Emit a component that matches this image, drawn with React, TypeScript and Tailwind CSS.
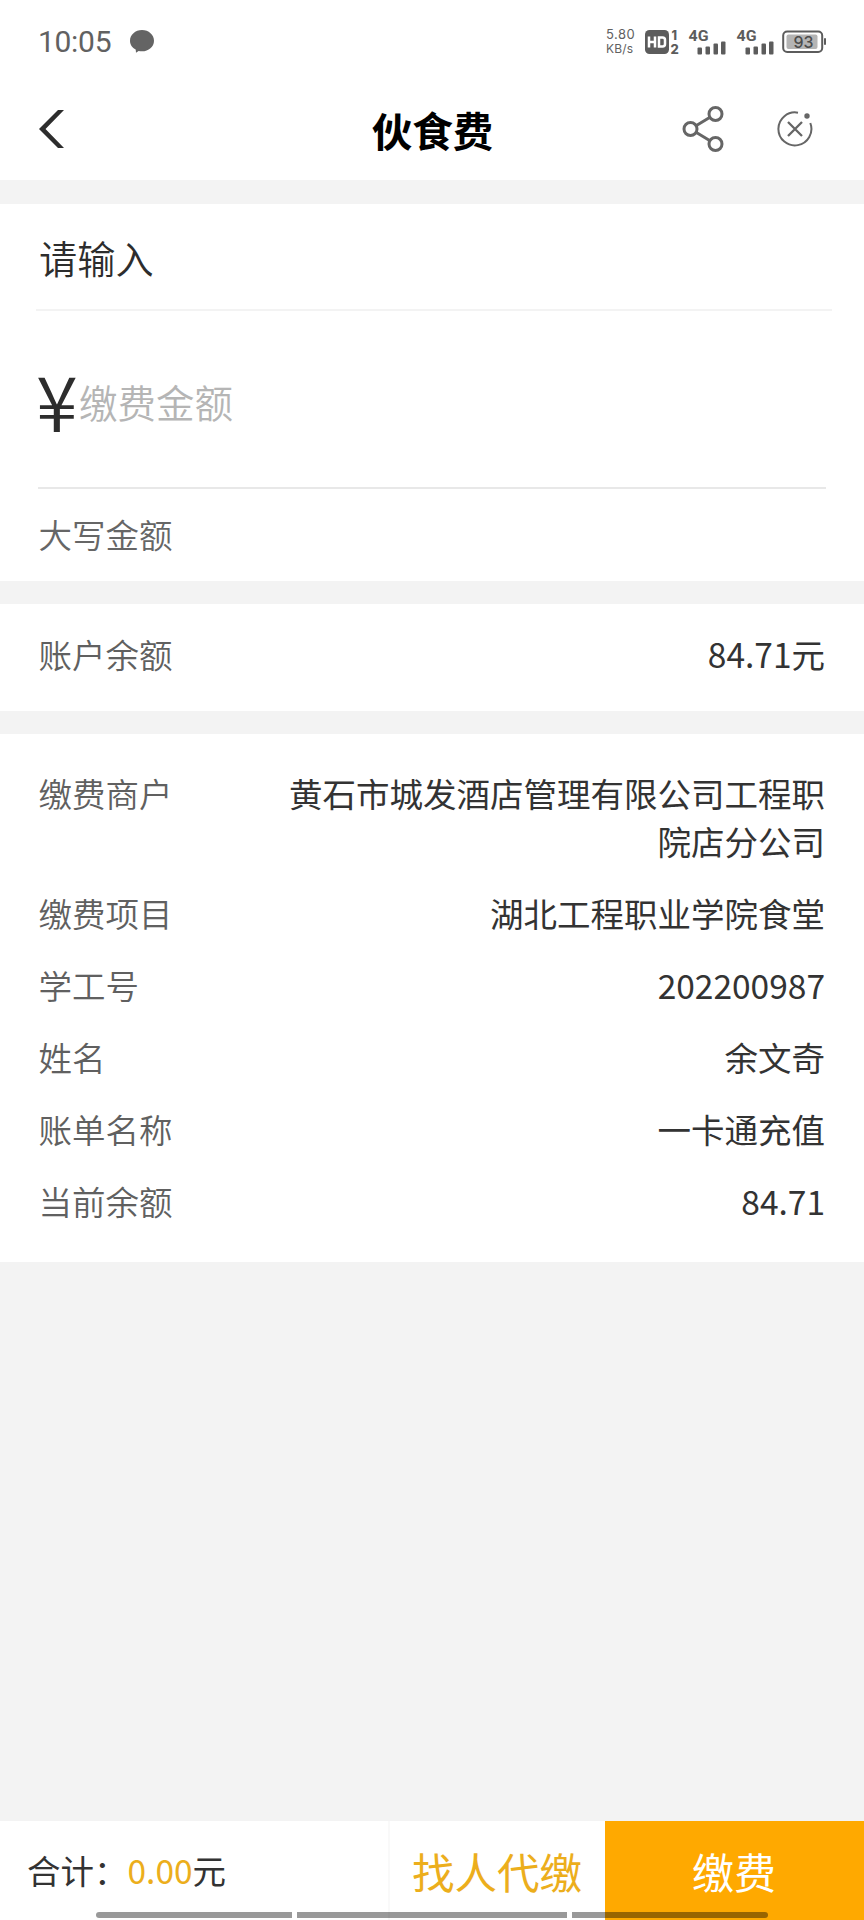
import React from 'react';

type Detail = {
  label: string;
  value: string;
};

const details: Detail[] = [
  { label: '缴费商户', value: '黄石市城发酒店管理有限公司工程职院店分公司' },
  { label: '缴费项目', value: '湖北工程职业学院食堂' },
  { label: '学工号', value: '202200987' },
  { label: '姓名', value: '余文奇' },
  { label: '账单名称', value: '一卡通充值' },
  { label: '当前余额', value: '84.71' },
];

function Signal() {
  return (
    <svg className="overflow-visible" width="38" height="26" viewBox="0 0 38 26" fill="#5c5c5c">
      <text x="0.5" y="12" fontSize="15.5" fontWeight="700" fontFamily="Roboto, sans-serif" textLength="20" lengthAdjust="spacingAndGlyphs">4G</text>
      <rect x="9.5" y="18.5" width="4.5" height="7" rx="1" />
      <rect x="17.5" y="17.5" width="4.5" height="8" rx="1" />
      <rect x="25.5" y="14.5" width="4.5" height="11" rx="1" />
      <rect x="33" y="12.5" width="4.5" height="13" rx="1" />
    </svg>
  );
}

function StatusBar() {
  return (
    <div className="flex h-[80px] items-center justify-between pl-[38px] pr-[38px] pt-[3px] font-normal text-[#616161]">
      <div className="flex items-center gap-[18px]">
        <span className="font-['Roboto',sans-serif] text-[30px] leading-none tracking-[-0.3px]">10:05</span>
        <svg width="26" height="24" viewBox="0 0 26 24" fill="#646464">
          <path d="M13 0c6.700 0 12 4.800 12 10.700s-5.300 10.600-12 10.600c-1.200 0-2.300-.1-3.400-.4L7 22.800 6.700 19.500C3.200 17.800 1 14.500 1 10.700 1 4.800 6.300 0 13 0z" />
        </svg>
      </div>

      <div className="flex items-center">
        <div className="w-[29px] whitespace-nowrap font-['Inter',sans-serif] text-[13px] leading-[13.5px] tracking-[0.5px]">
          <p>5.80</p>
          <p className="text-[12px] tracking-[0.2px]">KB/s</p>
        </div>
        <svg className="ml-[9px] overflow-visible" width="36" height="26" viewBox="0 0 36 26" fill="#5c5c5c">
          <rect x="1" y="1" width="24" height="24" rx="4.5" />
          <path d="M5 7.500v11M11 7.500v11M5 13h6M15 8.500h3.500q2.500 0 2.500 2.500v4q0 2.500-2.500 2.500H15z" fill="none" stroke="#fff" strokeWidth="2.5" />
          <text x="27.5" y="10.5" fontSize="12.5" fontWeight="800" fontFamily="Inter, sans-serif">1</text>
          <text x="26.5" y="25" fontSize="13" fontWeight="800" fontFamily="Inter, sans-serif">2</text>
        </svg>
        <div className="ml-[8px]"><Signal /></div>
        <div className="ml-[10px]"><Signal /></div>
        <svg className="ml-[8px] overflow-visible" width="44" height="24" viewBox="0 0 44 24">
          <rect x="1.2" y="1.5" width="39" height="20.5" rx="4" fill="none" stroke="#5c5c5c" strokeWidth="2" />
          <rect x="4.5" y="4.5" width="31" height="14.5" rx="2" fill="#b4b4b4" />
          <rect x="42" y="8" width="2" height="7" rx="1" fill="#5c5c5c" />
          <text x="11.5" y="18" fontSize="16.5" fontWeight="500" fontFamily="Inter, sans-serif" fill="#4b4b4b" textLength="20" lengthAdjust="spacingAndGlyphs">93</text>
        </svg>
      </div>
    </div>
  );
}

function Header() {
  return (
    <header className="grid h-[100px] grid-cols-[1fr_auto_1fr] items-center pb-[2px] pl-[38px] pr-[51px]">
      <svg width="26" height="40" viewBox="0 0 26 40" fill="#2d2d2d">
        <path d="M20 1h6L7.500 20 26 39h-6L1 20z" />
      </svg>
      <h1 className="translate-x-[7px] pt-[2px] text-[40.5px] font-bold leading-[48px] text-black">伙食费</h1>
      <div className="flex items-center justify-end gap-[53px]">
        <svg width="42" height="46" viewBox="0 0 42 46" fill="none" stroke="#666" strokeWidth="3">
          <circle cx="8.5" cy="23" r="6.5" />
          <circle cx="33.5" cy="8" r="6.5" />
          <circle cx="33.5" cy="38" r="6.5" />
          <path d="M14 19.700 28 11.300M14 26.300l14 8.400" />
        </svg>
        <svg width="36" height="36" viewBox="0 0 36 36" fill="none" stroke="#666" strokeWidth="2">
          <path d="M21 1.700A16.500 16.500 0 1 0 33.300 12" />
          <path d="M11 11l14 14M25 11 11 25" strokeWidth="2.3" />
          <circle cx="30" cy="5" r="2.7" fill="#666" stroke="none" />
        </svg>
      </div>
    </header>
  );
}

function AmountForm() {
  return (
    <section className="h-[377px] bg-white">
      <div className="ml-[36px] mr-[32px] flex h-[107px] items-center border-b-2 border-[#f3f3f3] pl-[3px] pt-[3px] text-[38.2px] text-[#2d2d2d]">
        请输入
      </div>
      <div className="mx-[38px] flex h-[178px] items-center border-b-2 border-[#e8e8e8]">
        <span className="-ml-[2px] w-[43px] pb-[1px] text-[76px] leading-none text-[#2d2d2d]">¥</span>
        <span className="pt-[4px] text-[38.5px] leading-none text-[#b5b5b5]">缴费金额</span>
      </div>
      <div className="flex h-[92px] items-center pb-[2px] pl-[38.5px] text-[33.5px] text-[#666]">大写金额</div>
    </section>
  );
}

function Row({ label, value }: Detail) {
  return (
    <div className="flex justify-between">
      <span className="text-[#606060]">{label}</span>
      <span className="w-[550px] text-right font-normal text-[#333]">{value}</span>
    </div>
  );
}

function Footer() {
  return (
    <footer className="relative flex h-[99px] bg-white">
      <div className="flex w-[390px] items-center border-r-2 border-[#f9f9f9] pl-[27px] font-normal text-[33.5px] text-[#333]">
        合计：<span className="text-[#ecae1c]">0.00</span>元
      </div>
      <button className="w-[215px] pr-[1px] text-[42.5px] font-normal text-[#ecae1c]">找人代缴</button>
      <button className="flex-1 bg-[#ffa900] pr-[1px] text-[42px] font-normal text-white">缴费</button>

      {/* System gesture bars */}
      <div className="absolute bottom-[2px] left-[96px] flex gap-[5px]">
        <div className="h-[6px] w-[196px] rounded-l-full bg-black/40" />
        <div className="h-[6px] w-[270px] bg-black/40" />
        <div className="h-[6px] w-[196px] rounded-r-full bg-black/40" />
      </div>
    </footer>
  );
}

export default function App() {
  return (
    <div className="flex h-[1920px] w-[864px] flex-col bg-[#f3f3f3] font-['Noto_Sans_CJK_SC',sans-serif] font-[350]">
      <div className="bg-white">
        <StatusBar />
        <Header />
      </div>

      <main className="mt-[24px] flex flex-1 flex-col gap-[23px]">
        <AmountForm />
        <section className="h-[107px] bg-white pl-[38.5px] pr-[39px] pt-[25.500px] text-[33.5px] leading-[48px]">
          <Row label="账户余额" value="84.71元" />
        </section>
        <section className="flex h-[528px] flex-col gap-[24px] bg-white pl-[38.5px] pr-[39px] pt-[34.5px] text-[33.5px] leading-[48px]">
          {details.map(d => (
            <Row key={d.label} {...d} />
          ))}
        </section>
      </main>

      <Footer />
    </div>
  );
}
